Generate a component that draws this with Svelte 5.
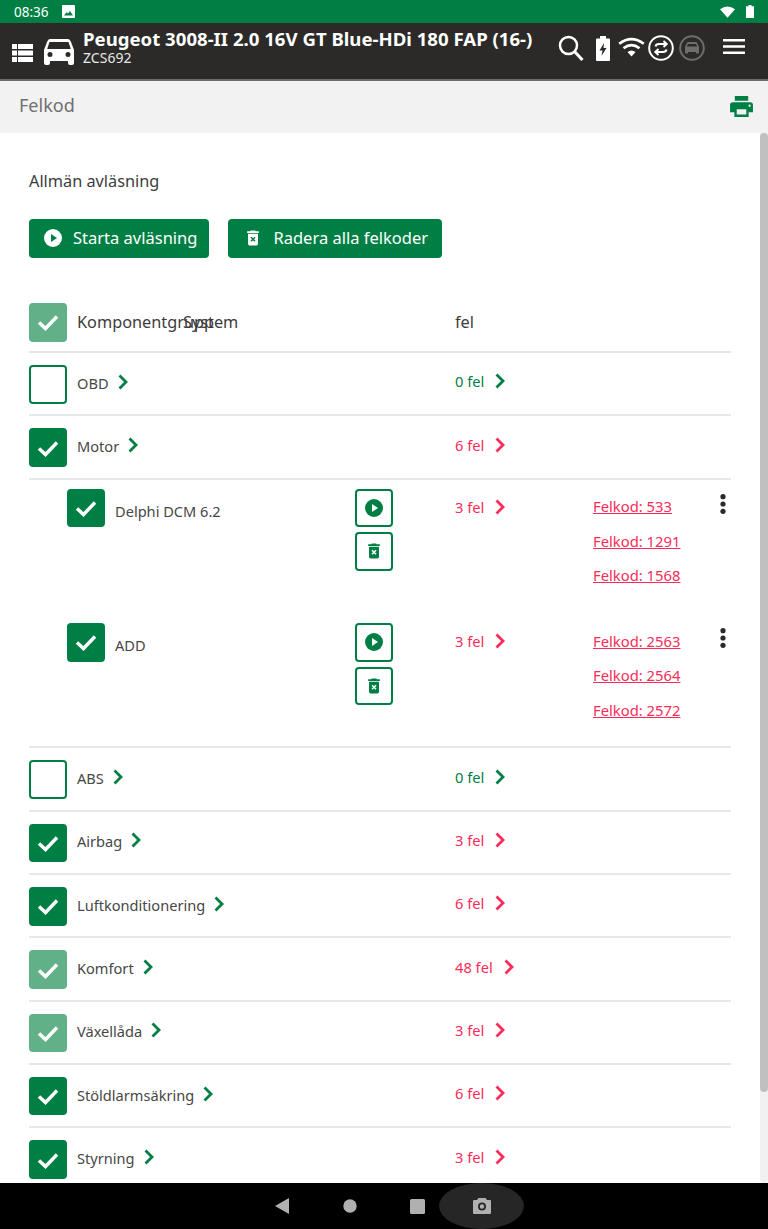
<script>
  const check = 'M3 12.500 L9.500 18.500 L21 6.500';
  const top1 = [{ name: 'OBD', n: 0, state: 'off' }, { name: 'Motor', n: 6, state: 'on' }];
  const subs = [
    { name: 'Delphi DCM 6.2', n: 3, codes: [533, 1291, 1568] },
    { name: 'ADD', n: 3, codes: [2563, 2564, 2572] }
  ];
  const rest = [
    { name: 'ABS', n: 0, state: 'off' },
    { name: 'Airbag', n: 3, state: 'on' },
    { name: 'Luftkonditionering', n: 6, state: 'on' },
    { name: 'Komfort', n: 48, state: 'part' },
    { name: 'Växellåda', n: 3, state: 'part' },
    { name: 'Stöldlarmsäkring', n: 6, state: 'on' },
    { name: 'Styrning', n: 3, state: 'on' }
  ];
</script>

{#snippet box(state)}
  <span class="box {state}">
    {#if state !== 'off'}
      <svg viewBox="0 0 24 24" width="24" height="24"><path d={check} fill="none" stroke="#fff" stroke-width="3.400" /></svg>
    {/if}
  </span>
{/snippet}

{#snippet chev(cls)}
  <svg class="chev {cls}" viewBox="0 0 10 16" width="10" height="16"><path d="M1.500 1.500 L8 8 L1.500 14.500" fill="none" stroke="currentColor" stroke-width="2.800" /></svg>
{/snippet}

{#snippet fel(n)}
  <div class="fel {n === 0 ? 'ok' : 'bad'}"><span>{n} fel</span>{@render chev('')}</div>
{/snippet}

{#snippet row(r)}
  <div class="row">
    <div class="namecell">
      {@render box(r.state)}
      <span class="name">{r.name}</span>
      {@render chev('green')}
    </div>
    {@render fel(r.n)}
  </div>
{/snippet}

{#snippet trash(fill, x)}
  <svg viewBox="0 0 24 24" width="20" height="20"><path fill={fill} d="M6 19a2 2 0 0 0 2 2h8a2 2 0 0 0 2-2V7H6zM15.500 4l-1-1h-5l-1 1H5v2h14V4z" /><path d="M9.600 11 L14.400 16 M14.400 11 L9.600 16" stroke={x} stroke-width="1.800" /></svg>
{/snippet}

{#snippet play(fill, tri)}
  <svg viewBox="0 0 20 20" width="20" height="20"><circle cx="10" cy="10" r="9" fill={fill} /><path d="M8 6 L14 10 L8 14 Z" fill={tri} /></svg>
{/snippet}

<div class="screen">
  <div class="status">
    <span class="time">08:36</span>
    <svg class="pic" viewBox="0 0 13 13" width="13" height="13"><path fill="#fff" fill-rule="evenodd" d="M1 0h11a1 1 0 0 1 1 1v11a1 1 0 0 1-1 1H1a1 1 0 0 1-1-1V1a1 1 0 0 1 1-1zM2 10.500h9L8 6 6 8.600 4.600 7.200z" /></svg>
    <span class="grow"></span>
    <svg viewBox="0 0 16 12" width="15" height="12"><path fill="#fff" d="M0 3 Q8 -3 16 3 L8 12 Z" /></svg>
    <svg class="batt" viewBox="0 0 8 13" width="8" height="13"><path fill="#fff" d="M2.500 0h3v1.200H8V13H0V1.200h2.500z" /></svg>
  </div>

  <header class="top">
    <svg class="list" viewBox="0 0 21 18" width="21" height="18"><path fill="#fff" d="M0 0h5v5H0zM6 0h15v5H6zM0 6.500h5v5H0zM6 6.500h15v5H6zM0 13h5v5H0zM6 13h15v5H6z" /></svg>
    <svg class="car" viewBox="0 0 30 26" width="30" height="26"><path fill="#fff" fill-rule="evenodd" d="M6 0h18q2 0 3 3l3 8v13q0 2-2 2h-2q-2 0-2-2v-2H6v2q0 2-2 2H2q-2 0-2-2V11l3-8q1-3 3-3zM5.500 3 3.200 10h23.600L24.500 3zM6 13a2.500 2.500 0 1 0 0 5 2.500 2.500 0 0 0 0-5zM24 13a2.500 2.500 0 1 0 0 5 2.500 2.500 0 0 0 0-5z" /></svg>
    <div class="titles">
      <div class="title">Peugeot 3008-II 2.0 16V GT Blue-HDi 180 FAP (16-)</div>
      <div class="reg">ZCS692</div>
    </div>
    <div class="tools">
      <svg viewBox="0 0 26 27" width="26" height="27"><circle cx="10.500" cy="10.500" r="8.500" fill="none" stroke="#fff" stroke-width="2.500" /><path d="M16.500 16.500 L24.500 25" stroke="#fff" stroke-width="3" /></svg>
      <svg class="t-batt" viewBox="0 0 14 25" width="14" height="25"><path fill="#fff" fill-rule="evenodd" d="M4 0h6v2.500h3a1 1 0 0 1 1 1V24a1 1 0 0 1-1 1H1a1 1 0 0 1-1-1V3.500a1 1 0 0 1 1-1h3zM8 7 3.500 14.500H6.500L5.500 20 10.500 12H7.500z" /></svg>
      <svg class="t-wifi" viewBox="0 0 27 20" width="27" height="20"><g fill="none" stroke="#fff" stroke-width="2.600"><path d="M1.200 6.800 Q13.500 -2.500 25.800 6.800" /><path d="M5.500 11.300 Q13.500 5 21.500 11.300" /></g><path fill="#fff" d="M9.500 15 Q13.500 12 17.500 15 L13.500 19.500Z" /></svg>
      <svg class="t-sync" viewBox="0 0 26 26" width="26" height="26"><circle cx="13" cy="13" r="11.800" fill="none" stroke="#fff" stroke-width="2" /><path d="M7.500 11.500 Q8 9 11 9 H18 M15.500 6 L18.700 9 15.500 12 M18.500 14.500 Q18 17 15 17 H8 M10.500 14 L7.300 17 10.500 20" fill="none" stroke="#fff" stroke-width="2" /></svg>
      <svg class="t-ecu" viewBox="0 0 26 26" width="26" height="26"><circle cx="13" cy="13" r="11.800" fill="none" stroke="#6e6e6e" stroke-width="2" /><path fill="#6e6e6e" fill-rule="evenodd" d="M9 7h8q1 0 1.500 1.500L20 12v6.500h-3V17H9v1.500H6V12l1.500-3.500Q8 7 9 7zM8.800 9 8 11.500h10L17.200 9z" /></svg>
      <svg class="t-menu" viewBox="0 0 22 15" width="22" height="15"><path fill="#fff" d="M0 0h22v2.400H0zM0 6.300h22v2.400H0zM0 12.600h22V15H0z" /></svg>
    </div>
  </header>

  <div class="sub">
    <span>Felkod</span>
    <svg viewBox="0 0 24 22" width="23" height="21"><path fill="#007f45" fill-rule="evenodd" d="M5 0h14v5H5zM3 6.500h18a3 3 0 0 1 3 3V17h-4.500v5h-15v-5H0V9.500a3 3 0 0 1 3-3zM7 14v5.500h10V14zM20.500 9a1.200 1.200 0 1 0 0 2.400 1.200 1.200 0 0 0 0-2.400z" /></svg>
  </div>

  <div class="body">
    <main>
      <p class="heading">Allmän avläsning</p>
      <div class="actions">
        <button class="btn">{@render play('#fff', '#007f45')}<span>Starta avläsning</span></button>
        <button class="btn">{@render trash('#fff', '#007f45')}<span>Radera alla felkoder</span></button>
      </div>

      <div class="thead">
        {@render box('part')}
        <span class="th-a">Komponentgrupp</span>
        <span class="th-b">System</span>
        <span class="th-c">fel</span>
      </div>

      {#each top1 as r}
        {@render row(r)}
      {/each}

      <div class="subs">
        {#each subs as s}
          <div class="subrow">
            <div class="subname">
              {@render box('on')}
              <span class="name">{s.name}</span>
            </div>
            <div class="iconbtns">
              <button class="ib">{@render play('#007f45', '#fff')}</button>
              <button class="ib">{@render trash('#007f45', '#fff')}</button>
            </div>
            {@render fel(s.n)}
            <div class="codes">
              {#each s.codes as c}
                <a href="#top" onclick={(e) => e.preventDefault()}>Felkod: {c}</a>
              {/each}
            </div>
            <svg class="kebab" viewBox="0 0 6 20" width="6" height="20"><circle cx="3" cy="2.700" r="2.600" fill="#2b2a29" /><circle cx="3" cy="10" r="2.600" fill="#2b2a29" /><circle cx="3" cy="17.300" r="2.600" fill="#2b2a29" /></svg>
          </div>
        {/each}
      </div>

      {#each rest as r}
        {@render row(r)}
      {/each}
    </main>
    <div class="track"><div class="thumb"></div></div>
  </div>

  <nav class="android">
    <svg viewBox="0 0 14 16" width="14" height="16"><path fill="#b0b0b0" d="M14 0v16L0 8z" /></svg>
    <svg viewBox="0 0 14 14" width="14" height="14"><circle cx="7" cy="7" r="6.700" fill="#b0b0b0" /></svg>
    <svg viewBox="0 0 15 15" width="15" height="15"><rect width="15" height="15" rx="1.500" fill="#b0b0b0" /></svg>
    <div class="shot">
      <svg viewBox="0 0 18 16" width="18" height="16"><path fill="#b0b0b0" fill-rule="evenodd" d="M5.500 0h7L14 2h3a1 1 0 0 1 1 1v12a1 1 0 0 1-1 1H1a1 1 0 0 1-1-1V3a1 1 0 0 1 1-1h3zM9 4.500a4 4 0 1 0 0 8 4 4 0 0 0 0-8zM9 6.300a2.200 2.200 0 1 1 0 4.400 2.200 2.200 0 0 1 0-4.400z" /></svg>
    </div>
  </nav>
</div>

<style>
  :global(body) { margin: 0; background: #fff; }
  .screen {
    width: 768px; height: 1229px; display: flex; flex-direction: column; overflow: hidden;
    font-family: "Noto Sans", sans-serif; color: #3f3f3f; background: #fff;
  }
  .status {
    flex: 0 0 23px; background: #007f45; display: flex; align-items: center;
    padding: 0 14px; gap: 9px; color: #fff; font-size: 13.500px;
  }
  .status .grow { flex: 1; }
  .status .pic { margin-left: 4px; }
  .status .batt { margin-left: 2px; }
  .top {
    flex: 0 0 58px; box-sizing: border-box; background: #2b2a29; border-bottom: 2px solid #6d6d6d;
    display: flex; align-items: center; padding: 0 23px 0 12px; color: #fff;
  }
  .list { margin-top: 3px; }
  .car { margin: 2px 0 0 11px; }
  .titles { margin: -6px 0 0 9px; width: 475px; flex: 0 0 auto; }
  .title { font-weight: 700; font-size: 18.600px; line-height: 21px; margin-top: -3px; white-space: nowrap; }
  .reg { font-size: 14px; line-height: 17px; color: #e8e8e8; }
  .tools { display: flex; align-items: center; margin-top: -6px; }
  .t-batt { margin-left: 12px; }
  .t-wifi { margin-left: 8px; margin-top: -2px; }
  .t-sync { margin-left: 3px; margin-top: -1px; }
  .t-ecu { margin-left: 5px; margin-top: -1px; }
  .t-menu { margin-left: 18px; margin-top: -4px; }
  .sub {
    flex: 0 0 52px; background: #f2f2f2; display: flex; align-items: center; justify-content: space-between;
    padding: 0 15px 0 19px; font-size: 18px; color: #6f6f6f;
  }
  .sub span { margin-top: -4px; }
  .sub svg { margin-top: -1px; }
  .body { flex: 1; display: flex; min-height: 0; }
  main { flex: 1; padding: 0 29px; overflow: hidden; min-width: 0; }
  .heading { margin: 37px 0 0; font-size: 16.300px; line-height: 22px; color: #3c3c3c; }
  .actions { display: flex; gap: 19px; margin-top: 27px; }
  .btn {
    height: 38.500px; border: 0; border-radius: 4px; background: #007f45; color: #fff; display: flex; align-items: center;
    gap: 10px; font: 16.500px "Noto Sans", sans-serif;
  }
  .btn:first-child { padding: 0 12px 0 14px; }
  .btn:last-child { padding: 0 14px 0 15px; }
  .btn span { margin-top: -1px; }
  .thead {
    position: relative; display: flex; align-items: flex-start; height: 50px; box-sizing: border-box; margin-top: 45.500px;
    border-bottom: 2px solid #e4e8ea; font-size: 16.300px; color: #3c3c3c; line-height: 38px;
  }
  .th-a { margin-left: 10px; }
  .th-b { position: absolute; left: 154px; }
  .th-c { position: absolute; left: 426px; }
  .box {
    flex: 0 0 auto; box-sizing: border-box; width: 38px; height: 38.500px; border-radius: 4px;
    display: flex; align-items: center; justify-content: center; background: #007f45;
  }
  .box.part { background: #62b088; }
  .box.off { background: #fff; border: 2px solid #007f45; }
  .row {
    display: grid; grid-template-columns: 426px 1fr; align-items: start; height: 63.330px; box-sizing: border-box;
    border-bottom: 2px solid #e4e8ea; padding-top: 12px;
  }
  .namecell { display: flex; align-items: center; height: 38.500px; }
  .name { margin-left: 10px; color: #474747; font-size: 14.600px; margin-top: -3px; }
  .chev { flex: 0 0 auto; }
  .chev.green { color: #007f45; margin: -5px 0 0 9px; }
  .fel { display: flex; align-items: center; gap: 11px; font-size: 14.700px; }
  .row .fel { height: 38.500px; margin-top: -3px; }
  .fel.ok { color: #007f45; }
  .fel.bad { color: #fb2c58; }
  .subs { height: 268.700px; box-sizing: border-box; border-bottom: 2px solid #e4e8ea; padding-top: 9px; }
  .subrow {
    display: grid; grid-template-columns: 326px 100px 138px 127px 6px; align-items: start; height: 134.500px;
  }
  .subname { display: flex; align-items: flex-start; padding-left: 38px; }
  .subname .name { margin-top: 12px; }
  .iconbtns { display: flex; flex-direction: column; gap: 5px; }
  .subrow .fel { margin-top: 8px; }
  .ib {
    width: 38px; height: 38.500px; box-sizing: border-box; background: #fff; border: 2px solid #007f45; border-radius: 4px;
    padding: 0; display: flex; align-items: center; justify-content: center;
  }
  .codes { display: flex; flex-direction: column; gap: 14.500px; font-size: 14.800px; line-height: 20px; margin-top: 7.500px; }
  .codes a { color: #fb2c58; text-decoration: underline; }
  .kebab { margin-top: 5px; }
  .track { flex: 0 0 8px; background: #f1f1f1; border-radius: 0 0 4px 4px; height: 1050px; }
  .thumb { width: 8px; height: 959px; border-radius: 4px; background: #c0c0c0; }
  .android {
    flex: 0 0 46px; background: #000; display: flex; align-items: center; padding-left: 275px;
  }
  .android svg:nth-child(2) { margin-left: 54px; }
  .android svg:nth-child(3) { margin-left: 53px; }
  .shot {
    margin-left: 14px; width: 85px; height: 46px; border-radius: 50%; background: #262626;
    display: flex; align-items: center; justify-content: center;
  }
</style>
